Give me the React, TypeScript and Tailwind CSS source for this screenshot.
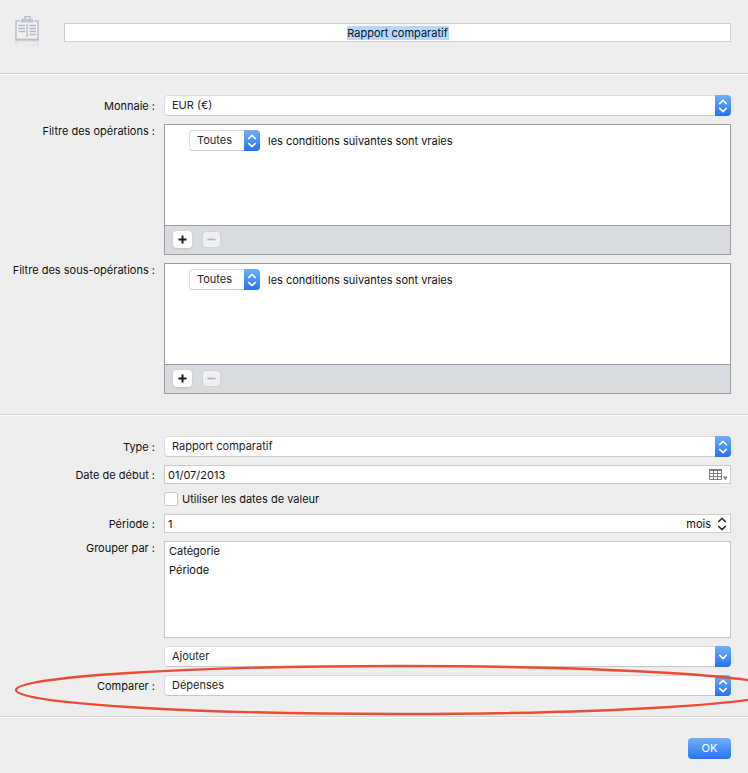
import { useState } from 'react'
import type { ReactNode } from 'react'

function Chevrons({ className }: { className: string }) {
  return (
    <svg
      viewBox="0 0 10 14"
      className={className}
      fill="none"
      stroke="currentColor"
      strokeWidth="1.5"
      strokeLinecap="round"
      strokeLinejoin="round"
    >
      <path d="M1.6 4.6 5 1.4l3.4 3.2M1.6 9.4 5 12.6l3.4-3.2" />
    </svg>
  )
}

function ChevronDown() {
  return (
    <svg
      viewBox="0 0 10 14"
      className="h-3.5 w-2.5"
      fill="none"
      stroke="currentColor"
      strokeWidth="1.6"
      strokeLinecap="round"
      strokeLinejoin="round"
    >
      <path d="M1.8 5.4 5 8.6l3.2-3.2" />
    </svg>
  )
}

function ReportIcon() {
  return (
    <svg viewBox="0 0 26 32" className="h-8 w-[26px] shrink-0" fill="none">
      <rect x="2" y="5" width="22" height="18" fill="#f1f2f3" />
      <path d="M6 5H2v18.5h22V5h-4" stroke="#c5ccd5" strokeWidth="2" />
      <path d="M1 24h24" stroke="#aab3bd" strokeWidth="1" />
      <path d="M7 3h3V0h7v3h2v3.5H7z" fill="#bbc3cd" />
      <path d="M11.5 1.5h4V3h-4z" fill="#eeeeee" />
      <path d="M13 8v13" stroke="#c5ccd5" strokeWidth="2" />
      <path
        d="M4.5 9.5h6.5M4.5 12.5h6.5M4.5 15.5h6.5M15.5 9.5H22M15.5 12.5H22M15.5 15.5H22M15.5 18.5H22"
        stroke="#b0b9c4"
        strokeWidth="1.5"
      />
      <path d="M2 25.5v5M24 25.5v5" stroke="#e0e3e7" strokeWidth="1.6" />
      <path d="M1 25.5h24M13 28v2M15.5 29.5H22" stroke="#e2e4e7" strokeWidth="1.4" />
    </svg>
  )
}

function CalendarIcon() {
  return (
    <svg viewBox="0 0 20 12" className="h-3 w-5" fill="none">
      <path
        d="M1.5 1v9.5h12V1M1.5 4.5h12M1.5 7.5h12M5.5 1v9.5M9.5 1v9.5"
        stroke="#808080"
        strokeWidth="1"
      />
      <path d="M1 1h13" stroke="#808080" strokeWidth="2" />
      <path d="M15 7.5h4.6l-2.3 4z" fill="#808080" />
    </svg>
  )
}

interface PopupProps {
  id?: string
  label?: string
  options: string[]
  pullDown?: boolean
}

function Popup({ id, label, options, pullDown }: PopupProps) {
  return (
    <div className="relative h-[21px]">
      <select
        id={id}
        aria-label={label}
        className="block h-full w-full appearance-none rounded border border-[#dcdcdc] border-b-[#c8c8c8] bg-white pb-0.5 pl-[7px] pr-6 text-[#262626] outline-none"
      >
        {options.map((option) => (
          <option key={option}>{option}</option>
        ))}
      </select>
      <span className="pointer-events-none absolute inset-y-0 right-0 flex w-4 items-center justify-center rounded-r bg-linear-to-b from-[#6fb0f8] to-[#2571f5] text-white">
        {pullDown ? <ChevronDown /> : <Chevrons className="h-3.5 w-2.5" />}
      </span>
    </div>
  )
}

interface RowProps {
  label: string
  htmlFor?: string
  top?: boolean
  children: ReactNode
}

function Row({ label, htmlFor, top, children }: RowProps) {
  return (
    <div className={top ? 'flex items-start gap-2' : 'flex items-center gap-2'}>
      <label htmlFor={htmlFor} className="w-39 shrink-0 whitespace-nowrap pr-px text-right">
        {label}
      </label>
      <div className="min-w-0 flex-1">{children}</div>
    </div>
  )
}

function FilterBox({ id }: { id: string }) {
  return (
    <div className="border border-[#9c9c9c] bg-white">
      <div className="h-[100px] pl-6 pt-[5px]">
        <div className="flex items-center gap-2">
          <div className="w-[71px] shrink-0">
            <Popup id={id} options={['Toutes', 'Une']} />
          </div>
          <span>les conditions suivantes sont vraies</span>
        </div>
      </div>
      <div className="flex h-[29px] items-center gap-2.5 border-t border-[#9c9c9c] bg-[#d8dbe0] pb-px pl-2">
        <button
          aria-label="Ajouter une condition"
          className="flex h-[17px] w-[19px] items-center justify-center rounded bg-white shadow-sm"
        >
          <svg viewBox="0 0 9 9" className="size-[9px]" stroke="#1a1a1a" strokeWidth="2">
            <path d="M4.5 0.5v8M0.5 4.5h8" />
          </svg>
        </button>
        <button
          disabled
          aria-label="Supprimer une condition"
          className="flex h-[17px] w-[19px] items-center justify-center rounded border border-[#d0d2d5] bg-[#eff0f1]"
        >
          <svg viewBox="0 0 9 9" className="size-[9px]" stroke="#b3b3b3" strokeWidth="1.6">
            <path d="M0.5 4.5h8" />
          </svg>
        </button>
      </div>
    </div>
  )
}

export default function App() {
  const [title, setTitle] = useState('Rapport comparatif')
  const [startDate, setStartDate] = useState('01/07/2013')
  const [period, setPeriod] = useState(1)
  const [useValueDates, setUseValueDates] = useState(false)

  return (
    <div className="min-h-screen overflow-x-hidden bg-[#eeeeee] font-['Inter',sans-serif] text-[11px] leading-3.5 text-[#111111]">
      {/* Title */}
      <header className="flex items-start gap-6 border-b border-[#d2d2d2] pb-[25px] pl-3.5 pr-[17px] pt-4">
        <ReportIcon />
        <div className="flex-1 pt-[7px]">
          <div className="h-[19px] border border-[#cdcdcd] bg-white">
            <input
              aria-label="Nom du rapport"
              value={title}
              onChange={(e) => setTitle(e.target.value)}
              className="block h-full w-full bg-[linear-gradient(#b3d7ff,#b3d7ff)] bg-size-[102px_14px] bg-center bg-no-repeat text-center outline-none"
            />
          </div>
        </div>
      </header>

      {/* Filters */}
      <section className="flex flex-col gap-2 border-b border-t border-b-[#d2d2d2] border-t-[#fafafa] py-5 pr-[17px]">
        <Row label="Monnaie :" htmlFor="currency">
          <Popup id="currency" options={['EUR (€)', 'USD ($)']} />
        </Row>
        <Row label="Filtre des opérations :" htmlFor="filter" top>
          <FilterBox id="filter" />
        </Row>
        <Row label="Filtre des sous-opérations :" htmlFor="sub-filter" top>
          <FilterBox id="sub-filter" />
        </Row>
      </section>

      {/* Report options */}
      <section className="relative flex flex-col gap-2 border-b border-t border-b-[#d2d2d2] border-t-[#fafafa] py-5 pr-[17px]">
        <Row label="Type :" htmlFor="type">
          <Popup id="type" options={['Rapport comparatif']} />
        </Row>
        <Row label="Date de début :" htmlFor="start">
          <div className="flex h-[19px] items-center border border-[#cdcdcd] bg-white pl-[3px] pr-0.5">
            <input
              id="start"
              value={startDate}
              onChange={(e) => setStartDate(e.target.value)}
              className="min-w-0 flex-1 outline-none"
            />
            <button aria-label="Calendrier">
              <CalendarIcon />
            </button>
          </div>
        </Row>
        <label className="ml-41 flex h-3.5 items-center gap-1">
          <input
            type="checkbox"
            checked={useValueDates}
            onChange={(e) => setUseValueDates(e.target.checked)}
            className="size-3.5 appearance-none rounded-[3px] border border-[#c6c6c6] bg-white checked:bg-[#2571f5]"
          />
          Utiliser les dates de valeur
        </label>
        <Row label="Période :" htmlFor="period">
          <div className="flex h-[19px] items-center gap-1.5 border border-[#cdcdcd] bg-white px-[3px]">
            <input
              id="period"
              value={period}
              onChange={(e) => setPeriod(Number(e.target.value) || 0)}
              className="min-w-0 flex-1 outline-none"
            />
            <span>mois</span>
            <button
              aria-label="Changer la période"
              onClick={() => setPeriod(period + 1)}
              className="text-[#333333]"
            >
              <Chevrons className="h-3.5 w-2.5" />
            </button>
          </div>
        </Row>
        <Row label="Grouper par :" top>
          <ul className="h-[97px] border border-[#c4c4c4] bg-white px-1">
            <li className="leading-[19px]">Catégorie</li>
            <li className="leading-[19px]">Période</li>
          </ul>
        </Row>
        <div className="ml-41">
          <Popup label="Ajouter un groupe" options={['Ajouter']} pullDown />
        </div>
        <Row label="Comparer :" htmlFor="compare">
          <Popup id="compare" options={['Dépenses', 'Revenus']} />
        </Row>

        {/* Highlight around the last row */}
        <svg
          viewBox="0 0 748 52"
          preserveAspectRatio="none"
          className="pointer-events-none absolute bottom-0 left-0 h-13 w-full"
          fill="none"
        >
          <ellipse
            cx="399"
            cy="26"
            rx="383"
            ry="24"
            stroke="#ee4b35"
            strokeWidth="2.4"
            vectorEffect="non-scaling-stroke"
          />
        </svg>
      </section>

      <footer className="flex justify-end border-t border-[#fafafa] pb-3.5 pr-[17px] pt-5">
        <button className="h-[21px] w-[43px] rounded bg-linear-to-b from-[#6fb0f8] to-[#2571f5] pb-0.5 text-white">
          OK
        </button>
      </footer>
    </div>
  )
}
